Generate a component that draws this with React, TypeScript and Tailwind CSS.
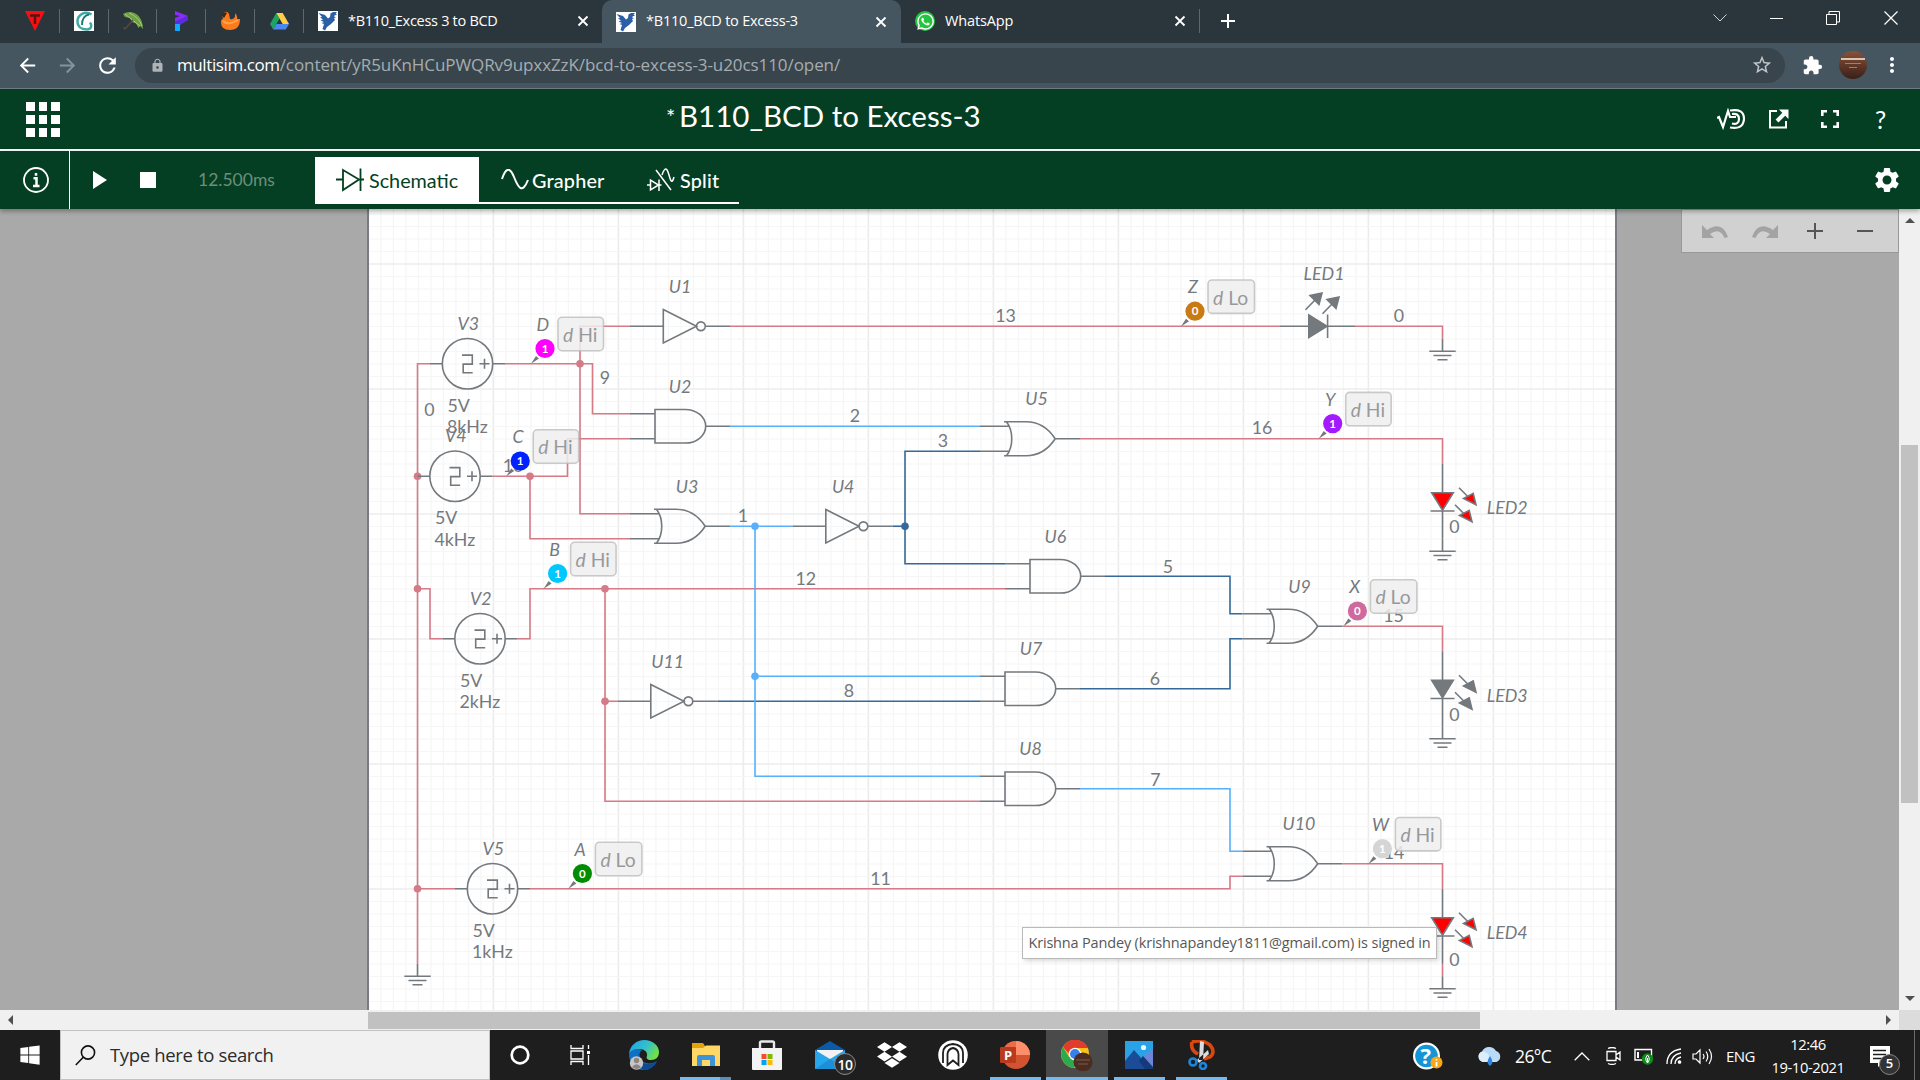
import React from 'react';
import { MdLock, MdStarBorder, MdExtension, MdMoreVert, MdSettings, MdArrowBack, MdArrowForward, MdRefresh } from 'react-icons/md';
import { FaDropbox, FaWindows, FaWhatsapp } from 'react-icons/fa';

type Pt = [number, number];

/* Schematic grid: one cell is 12.5px, origin at the top of the left supply bus. */
const U = 12.5;
const X = (k: number) => 417.5 + k * U;
const Y = (k: number) => 363.75 + k * U;

const INK = '#74797e';
const RED = '#d57a86';
const SKY = '#58b0fb';
const NAVY = '#35699a';

const wires: { c: string; p: Pt[] }[] = [
  { c: RED, p: [[1, 0], [0, 0], [0, 48]] },
  { c: RED, p: [[0, 18], [1, 18], [1, 22], [2, 22]] },
  { c: RED, p: [[0, 42], [3, 42]] },
  { c: RED, p: [[7, 0], [14, 0], [14, 4], [17, 4]] },
  { c: RED, p: [[17, -3], [13, -3], [13, 12], [17, 12]] },
  { c: RED, p: [[6, 9], [12, 9], [12, 6], [17, 6]] },
  { c: RED, p: [[9, 9], [9, 14], [17, 14]] },
  { c: RED, p: [[25, -3], [69, -3]] },
  { c: RED, p: [[75, -3], [82, -3], [82, -2]] },
  { c: RED, p: [[8, 22], [9, 22], [9, 18], [47, 18]] },
  { c: RED, p: [[15, 18], [15, 35], [45, 35]] },
  { c: RED, p: [[15, 27], [16, 27]] },
  { c: RED, p: [[9, 42], [65, 42], [65, 41], [66, 41]] },
  { c: RED, p: [[53, 6], [82, 6], [82, 8]] },
  { c: RED, p: [[74, 21], [82, 21], [82, 23]] },
  { c: RED, p: [[74, 40], [82, 40], [82, 42]] },
  { c: RED, p: [[82, 48], [82, 49]] },
  { c: NAVY, p: [[38, 13], [39, 13]] },
  { c: NAVY, p: [[45, 7], [39, 7], [39, 16], [47, 16]] },
  { c: NAVY, p: [[55, 17], [65, 17], [65, 20], [66, 20]] },
  { c: NAVY, p: [[53, 26], [65, 26], [65, 22], [66, 22]] },
  { c: NAVY, p: [[24, 27], [45, 27]] },
  { c: SKY, p: [[25, 5], [45, 5]] },
  { c: SKY, p: [[25, 13], [30, 13]] },
  { c: SKY, p: [[27, 13], [27, 33], [45, 33]] },
  { c: SKY, p: [[27, 25], [45, 25]] },
  { c: SKY, p: [[53, 34], [65, 34], [65, 39], [66, 39]] },
];

const nodes: [number, number, string][] = [
  [0, 9, RED], [0, 18, RED], [0, 42, RED], [13, 0, RED], [9, 9, RED], [15, 18, RED], [15, 27, RED],
  [27, 13, SKY], [27, 25, SKY], [39, 13, NAVY],
];

const sources: [number, number, string, string][] = [
  [4, 0, 'V3', '8kHz'], [3, 9, 'V4', '4kHz'], [5, 22, 'V2', '2kHz'], [6, 42, 'V5', '1kHz'],
];
const inverters: Pt[] = [[17, -3], [30, 13], [16, 27]];
const ands: Pt[] = [[17, 5], [47, 17], [45, 26], [45, 34]];
const ors: Pt[] = [[17, 13], [45, 6], [66, 21], [66, 40]];
const grounds: Pt[] = [[0, 48], [82, -2], [82, 14], [82, 29], [82, 49]];

const names: [string, number, number][] = [
  ['U1', 680, 292.7], ['U2', 680, 392.7], ['U3', 687, 492.7], ['U4', 843.2, 492.7], ['U5', 1036.5, 404.7],
  ['U6', 1055.4, 543], ['U7', 1031, 654.7], ['U8', 1030.6, 754.7], ['U9', 1299.6, 592.7], ['U10', 1299, 829.7],
  ['U11', 667.7, 668], ['LED1', 1324, 280],
];
const nets: [string, number, number][] = [
  ['0', 429.5, 415.7], ['9', 605, 383.5], ['10', 513, 472], ['1', 743, 522], ['13', 1005.5, 321.5], ['2', 855, 422],
  ['3', 943, 446.8], ['12', 805.7, 585], ['8', 849, 697], ['16', 1262, 433.8], ['5', 1168, 573], ['6', 1155, 685],
  ['7', 1155.5, 785.5], ['15', 1393.5, 622], ['14', 1394, 859], ['11', 880.5, 885], ['0', 1399, 321.5],
  ['0', 1454.3, 533.2], ['0', 1454.3, 721.3], ['0', 1454.3, 965.5],
];
const probes: { n: string; nx: number; x: number; y: number; c: string; v: string; s: string }[] = [
  { n: 'D', nx: 542.7, x: 545, y: 348.5, c: '#ff00ff', v: '1', s: 'Hi' },
  { n: 'C', nx: 518, x: 520.2, y: 461, c: '#0022ff', v: '1', s: 'Hi' },
  { n: 'B', nx: 554.7, x: 557.6, y: 573.5, c: '#00c8ff', v: '1', s: 'Hi' },
  { n: 'A', nx: 580, x: 582.4, y: 873.5, c: '#018c01', v: '0', s: 'Lo' },
  { n: 'Z', nx: 1193, x: 1195, y: 311.2, c: '#c97a12', v: '0', s: 'Lo' },
  { n: 'Y', nx: 1330.3, x: 1332.7, y: 423.6, c: '#a31aff', v: '1', s: 'Hi' },
  { n: 'X', nx: 1354.7, x: 1357.4, y: 611, c: '#cf6a9f', v: '0', s: 'Lo' },
  { n: 'W', nx: 1380.4, x: 1382.4, y: 848.7, c: '#d5d5d5', v: '1', s: 'Hi' },
];

function Led({ s, lit, name }: { s: number; lit: boolean; name: string }) {
  const fill = lit ? '#ff0000' : INK;
  return (
    <g transform={`translate(1442.5 ${Y(s)})`} stroke={INK} strokeWidth="1.6" fill="none">
      <path d="M0 0V29M0 48V75M-12 47.3H12" />
      <path d="M-10.8 29H10.8L0 46.5Z" fill={fill} />
      {[0, 1].map((i) => (
        <g key={i} transform={`translate(${-4 * i} ${17 * i})`}>
          <path d="M16.5 24L26 33.5" />
          <path d="M33.5 41L30.7 29.6L21 34.800Z" fill={fill} />
        </g>
      ))}
      <text x="44.2" y="50.6" fontStyle="italic" stroke="none" fill={INK}>{name}</text>
    </g>
  );
}

function Schematic() {
  const grid: React.ReactNode[] = [];
  for (let i = 0; i < 100; i++) grid.push(<path key={'v' + i} d={`M${368.4 + i * U} 209V1010`} stroke={i % 10 === 0 ? '#ececec' : '#f6f6f6'} strokeWidth={i % 10 === 0 ? 1.6 : 1.2} />);
  for (let i = -4; i < 60; i++) grid.push(<path key={'h' + i} d={`M368 ${264 + i * U}H1617`} stroke={i % 10 === 0 ? '#ececec' : '#f6f6f6'} strokeWidth={i % 10 === 0 ? 1.6 : 1.2} />);
  return (
    <svg width="1246" height="801" viewBox="369 209 1246 801" className="block font-['Lato',sans-serif] text-[17.8px]">
      {grid}
      <g fill="none" strokeWidth="1.6">
        {wires.map((w, i) => <polyline key={i} stroke={w.c} points={w.p.map(([a, b]) => `${X(a)},${Y(b)}`).join(' ')} />)}
      </g>
      {nodes.map(([a, b, c], i) => <circle key={i} cx={X(a)} cy={Y(b)} r="3.8" fill={c} />)}
      <g fill="none" stroke={INK} strokeWidth="1.6">
        {sources.map(([a, b, n, f]) => (
          <g key={n} transform={`translate(${X(a)} ${Y(b)})`}>
            <circle r="25.2" />
            <path d="M-37.5 0H-25.2M25.2 0H37.5" />
            <path d="M-5.5 -8.6H4.8V0.4H-4.3V9H5.2M12 0H22M17 -5V5" />
            <text x="0.8" y="-34" textAnchor="middle" fontStyle="italic" stroke="none" fill={INK}>{n}</text>
            <text x="-20" y="48" stroke="none" fill={INK}>5V</text>
            <text x="-20.5" y="69.5" stroke="none" fill={INK}>{f}</text>
          </g>
        ))}
        {inverters.map(([a, b], i) => (
          <path key={i} transform={`translate(${X(a)} ${Y(b)})`} d="M0 0H33M33.3 -16.8L66.5 0L33.3 16.8ZM75.3 0A4.4 4.4 0 1 1 66.5 0A4.4 4.4 0 1 1 75.3 0M75.3 0H100" />
        ))}
        {ands.map(([a, b], i) => (
          <path key={i} transform={`translate(${X(a)} ${Y(b)})`} d="M0 -12.5H25M0 12.5H25M25 -16.8H55C67 -16.8 75.7 -9 75.7 0S67 16.8 55 16.8H25ZM75.7 0H100" />
        ))}
        {ors.map(([a, b], i) => (
          <path key={i} transform={`translate(${X(a)} ${Y(b)})`} d="M0 -12.5H29.5M0 12.5H29.5M24 -17H46C59 -17 68 -11 75.2 0C68 11 59 17 46 17H24M26.5 -17C33.5 -8 33.5 8 26.5 17M75.2 0H100" />
        ))}
        {grounds.map(([a, b], i) => (
          <path key={i} transform={`translate(${X(a)} ${Y(b)})`} d="M0 0V12.5M-13.2 12.5H13.2M-9 16.8H9M-5 21H5" />
        ))}
        <path d="M1280 326.25H1308M1327.6 326.25H1355M1327.6 314.5V338" />
        <path d="M1308.8 315L1327 326.25L1308.8 337.5Z" fill={INK} />
        {[0, 1].map((i) => (
          <g key={i} transform={`translate(${17 * i} ${4 * i})`}>
            <path d="M1305.5 309.8L1315 300" />
            <path d="M1322 293L1310 295.5L1319 304.5Z" fill={INK} />
          </g>
        ))}
      </g>
      <Led s={8} lit name="LED2" />
      <Led s={23} lit={false} name="LED3" />
      <Led s={42} lit name="LED4" />
      {names.map(([t, x, y]) => <text key={t} x={x} y={y} textAnchor="middle" fontStyle="italic" fill={INK}>{t}</text>)}
      {nets.map(([t, x, y], i) => <text key={i} x={x} y={y} textAnchor="middle" fill={INK}>{t}</text>)}
      {probes.map((p) => (
        <g key={p.n}>
          <path d={`M${p.x - 14} ${p.y + 15.2}L${p.x - 9} ${p.y + 7.5}L${p.x - 6} ${p.y + 10}Z`} fill={INK} />
          <circle cx={p.x} cy={p.y} r="9.6" fill={p.c} />
          <text x={p.x} y={p.y + 4} textAnchor="middle" fontSize="11.5" fontWeight="700" fill="#fff">{p.v}</text>
          <text x={p.nx} y={p.y - 18} textAnchor="middle" fontStyle="italic" fill={INK}>{p.n}</text>
          <rect x={p.x + 13} y={p.y - 31.2} width={p.s === 'Lo' ? 46.5 : 45.5} height="33.4" rx="4" fill="#eeeeee" fillOpacity="0.85" stroke="#b9b9b9" strokeOpacity="0.75" strokeWidth="1.6" />
          <text x={p.x + 18} y={p.y - 6.6} fontSize="19.3" fill="#97999c"><tspan fontStyle="italic">d</tspan> {p.s}</text>
        </g>
      ))}
    </svg>
  );
}

function Eagle() {
  return (
    <svg width="20" height="20" viewBox="0 0 20 20" className="shrink-0">
      <rect width="20" height="20" fill="#fff" />
      <path d="M0.500 2L7 4L10 7.500L12 6L12.500 2.500L15 1H19L17.500 2.500L19 3.500L16.500 4.500V6H18.500L16 7L17 9L13 13L9 16L7 19.500L4.500 18L6 13L3.500 12L6 11L2.500 9.500L5 8.500L2 6.500L4 6Z" fill="#2a5fa5" />
    </svg>
  );
}

function TabClose() {
  return <svg width="12" height="12" viewBox="0 0 12 12" className="shrink-0"><path d="M1.500 1.500L10.500 10.500M10.500 1.500L1.500 10.500" stroke="#fff" strokeWidth="1.800" /></svg>;
}

function TabStrip() {
  return (
    <div className="flex h-[43px] items-center bg-[#2b363c] pb-px text-[14.5px] text-white">
      <div className="flex h-6 w-[60px] items-center border-r border-[#5d676e] pl-[25px]">
        <svg width="20" height="20" viewBox="0 0 20 20"><path d="M0 0H20L10 20Z" fill="#f80f0f" /><path d="M5 4.500H15M10 4.500V13" stroke="#5a1212" strokeWidth="2.400" /></svg>
      </div>
      <div className="flex h-6 w-[49px] items-center justify-center border-r border-[#5d676e]">
        <svg width="20" height="20" viewBox="0 0 20 20"><rect width="20" height="20" fill="#fff" /><path d="M17.500 3.500C11 -1 3.500 4 3.500 10.500C3.500 16 8 18.500 13 18.500C17 18.500 18.500 15 16 11.500" fill="none" stroke="#3fa9a2" strokeWidth="2.400" /><path d="M15 3.500Q8 5 8 14" fill="none" stroke="#167a78" strokeWidth="1.800" /></svg>
      </div>
      <div className="flex h-6 w-[48px] items-center justify-center border-r border-[#5d676e]">
        <svg width="20" height="20" viewBox="0 0 20 20"><path d="M0 3C7 -2 20 2 20 18L17 15L15.500 17L13 12.500L9 11L7 7L2 6Z" fill="#6f9f45" /><path d="M2 3L17 15M6 2Q16 6 19 15" stroke="#a6cc7c" fill="none" /><path d="M10 9L3 17Q1 19 1 16" fill="none" stroke="#5a4a42" strokeWidth="1.400" /></svg>
      </div>
      <div className="flex h-6 w-[49px] items-center justify-center border-r border-[#5d676e]">
        <svg width="14" height="20" viewBox="0 0 14 20"><path d="M1 0L14 5L1 11V7L6 5L1 4Z" fill="#8a2cff" /><path d="M14 5V9L6 14H1V11Z" fill="#5b2be0" /><path d="M1 13H6V20H1Z" fill="#12a8ff" /></svg>
      </div>
      <div className="flex h-6 w-[49px] items-center justify-center border-r border-[#5d676e]">
        <svg width="20" height="20" viewBox="0 0 20 20"><path d="M2 4Q6 -2 9 3L10 8Q16 9 15 2Q18 5 17 8L20 8Q20 19 10 19Q1 19 1 11Q1 8 3 8Z" fill="#ff7a1a" /><path d="M1 4Q4 0 7 2L4 7Z" fill="#3b2a1c" /><path d="M3 10Q8 15 18 9" fill="none" stroke="#ffa64a" strokeWidth="2" /></svg>
      </div>
      <div className="flex h-6 w-[49px] items-center justify-center border-r border-[#5d676e]">
        <svg width="19" height="17" viewBox="0 0 19 17"><path d="M6.300 0L9.500 5.500L3.200 16.500L0 11Z" fill="#1da462" /><path d="M6.300 0H12.700L19 11H12.700Z" fill="#ffcf48" /><path d="M6.300 11H19L15.800 16.500H3.200Z" fill="#4b87f0" /></svg>
      </div>
      <div className="flex w-[298px] items-center pl-[14px]">
        <Eagle /><span className="-mt-px ml-[10px] w-[229px] whitespace-nowrap font-['Open_Sans',sans-serif] tracking-[-0.29px]">*B110_Excess 3 to BCD</span><TabClose />
      </div>
      <div className="mt-px flex h-[43px] w-[299px] items-center rounded-t-[10px] bg-[#455660] pl-[14px]">
        <Eagle /><span className="-mt-px ml-[10px] w-[229px] whitespace-nowrap font-['Open_Sans',sans-serif] tracking-[-0.22px]">*B110_BCD to Excess-3</span><TabClose />
      </div>
      <div className="flex h-6 w-[299px] items-center border-r border-[#5d676e] pl-[14px]">
        <span className="flex size-5 shrink-0 items-center justify-center rounded-full bg-[#25c33f]"><FaWhatsapp size={19} /></span>
        <span className="-mt-px ml-[10px] w-[229px] font-['Open_Sans',sans-serif] tracking-[-0.15px]">WhatsApp</span><TabClose />
      </div>
      <svg width="14" height="14" viewBox="0 0 14 14" className="ml-[21px]"><path d="M7 0V14M0 7H14" stroke="#fff" strokeWidth="2" /></svg>
      <div className="ml-auto flex h-9 items-center self-start">
        <svg width="14" height="8" viewBox="0 0 14 8" className="mr-[43px]"><path d="M0.500 0.500L7 7L13.500 0.500" stroke="#cfd4d6" fill="none" /></svg>
        <span className="mr-[43px] h-px w-[13px] bg-white" />
        <svg width="14" height="14" viewBox="0 0 14 14" className="mr-[44px]"><path d="M0.500 3.500H10.500V13.500H0.500ZM3 3V0.500H13.500V11H11" stroke="#fff" fill="none" /></svg>
        <svg width="14" height="14" viewBox="0 0 14 14" className="mr-[22px]"><path d="M0.500 0.500L13.500 13.500M13.500 0.500L0.500 13.500" stroke="#fff" strokeWidth="1.200" /></svg>
      </div>
    </div>
  );
}

function AddressBar() {
  return (
    <div className="flex h-[46px] items-center border-b border-[#6f7b82] bg-[#455660] pb-[1px] text-white">
      <MdArrowBack size={23} className="ml-4" />
      <MdArrowForward size={23} className="ml-[17px] text-[#87939a]" />
      <MdRefresh size={25} className="ml-[16px]" />
      <div className="ml-[15px] flex h-[35px] w-[1650px] items-center rounded-full bg-[#39454c]">
        <MdLock size={15} className="ml-[15px] text-[#adb3b7]" />
        <span className="ml-[12px] whitespace-nowrap font-['Open_Sans',sans-serif] text-[17px] tracking-[-0.08px] text-[#a5adb1]"><span className="tracking-[-0.4px] text-white">multisim.com</span>/content/yR5uKnHCuPWQRv9upxxZzK/bcd-to-excess-3-u20cs110/open/</span>
        <MdStarBorder size={22} className="ml-auto mr-[12px] text-[#c3c8cb]" />
      </div>
      <MdExtension size={21} className="ml-[17px]" />
      <div className="ml-[16px] flex size-7 flex-col items-center justify-center gap-[3px] overflow-hidden rounded-full bg-gradient-to-b from-[#8a5238] to-[#3a2018]">
        <span className="mt-[-5px] h-[2px] w-6 bg-[#d8c4b8]" /><span className="h-px w-4 bg-[#9c7f70]" /><span className="h-px w-2 bg-[#9c7f70]" />
      </div>
      <MdMoreVert size={24} className="ml-[13px]" />
    </div>
  );
}

function AppHeader() {
  return (
    <div className="flex h-[62px] items-center border-b-2 border-white bg-[#043f23] text-white">
      <div className="ml-[26px] grid w-[34px] grid-cols-3 gap-x-[4px] gap-y-[4px]">
        {[0, 1, 2, 3, 4, 5, 6, 7, 8].map((i) => <span key={i} className="h-[9px] bg-white" />)}
      </div>
      <div className="ml-[606px] flex items-center whitespace-nowrap pb-[5px] font-['Lato',sans-serif] text-[29.5px]">
        <span className="w-[13px] text-[22px]">*</span><span>B110_BCD to Excess-3</span>
      </div>
      <div className="ml-auto flex items-center pr-[34px]">
        <svg width="28" height="22" viewBox="0 0 28 20" fill="none" stroke="#fff" strokeWidth="2.200"><path d="M0 9L2 8L6 18L11 2L13 8L19 8" /><path d="M13 1.500Q27 -1 27 10Q26 21 13 18.500" /><path d="M15 5Q22 4 22 10T15 14.500" /></svg>
        <svg width="20" height="20" viewBox="0 0 20 20" fill="none" stroke="#fff" strokeWidth="2" className="ml-6"><path d="M8 2H1V18.500H17V12" /><path d="M8 12L15 5" strokeWidth="4" /><path d="M10 0.500H19.500V10Z" fill="#fff" stroke="none" /></svg>
        <svg width="20" height="20" viewBox="0 0 20 20" fill="none" stroke="#fff" strokeWidth="2.600" className="ml-[31px]"><path d="M7 2.300H2.300V7M13 2.300H17.700V7M7 17.700H2.300V13M13 17.700H17.700V13" /></svg>
        <span className="ml-[35px] w-[11px] font-['Lato',sans-serif] text-[25px] leading-none">?</span>
      </div>
    </div>
  );
}

function SimBar() {
  return (
    <div className="relative z-10 flex h-[58px] bg-[#043f23] font-['Lato',sans-serif] text-[19.8px] text-white shadow-[0_2px_5px_rgba(0,0,0,0.35)]">
      <div className="flex w-[70px] items-center border-r border-white pl-[23px]">
        <svg width="26" height="26" viewBox="0 0 26 26" fill="none" stroke="#fff"><circle cx="13" cy="13" r="12" strokeWidth="1.800" /><path d="M13 6V8.700M10.500 11.200H13.500V18.500M10 19H16.500" strokeWidth="2.500" /></svg>
      </div>
      <svg width="14" height="18" viewBox="0 0 14 18" className="ml-[23px] mt-[20px]"><path d="M0 0L14 9L0 18Z" fill="#fff" /></svg>
      <span className="ml-[33px] mt-[21px] size-4 bg-white" />
      <span className="ml-[42px] mt-[17px] w-[117px] text-[17.5px] leading-6 text-[#6c8e7b]">12.500ms</span>
      <div className="mt-[6px] flex h-[47px] border-b-2 border-white">
        <div className="flex h-[47px] w-[164px] items-center bg-white pl-[21px] text-[#043f23]">
          <svg width="28" height="24" viewBox="0 0 28 24" fill="none" stroke="#043f23" strokeWidth="1.800" className="-mt-0.5 shrink-0"><path d="M0 11.500H7M7 2V22L23 11.500ZM24.500 0.500V23M24 11.500H28" /></svg>
          <span className="ml-[5px]">Schematic</span>
        </div>
        <div className="flex w-[150px] items-center pl-[22px]">
          <svg width="28" height="22" viewBox="0 0 28 22" fill="none" stroke="#fff" strokeWidth="2" className="shrink-0"><path d="M1 10C5 -2 9 -2 13 8S21 26 27 11" /></svg>
          <span className="ml-[3px] mt-0.5 font-medium tracking-[0.2px]">Grapher</span>
        </div>
        <div className="flex w-[110px] items-center pl-[18px]">
          <svg width="28" height="24" viewBox="0 0 28 24" fill="none" stroke="#fff" strokeWidth="1.500" className="shrink-0"><path d="M0 17H3M3.500 12V22L11.500 17ZM12 11.500V23M12 17H14.500M9 2L24 22" /><path d="M15 7C18 -2 20 0 22 7S25 16 27 9" /></svg>
          <span className="ml-[5px] mt-0.5 font-medium tracking-[0.2px]">Split</span>
        </div>
      </div>
      <MdSettings size={30} className="ml-auto mr-[18px] mt-[14px]" />
    </div>
  );
}

function Workspace() {
  return (
    <div className="flex h-[801px] bg-[#a9a9a9]">
      <div className="ml-[367px] border-x-2 border-[#797c80] bg-white"><Schematic /></div>
      <div className="ml-auto flex h-[44px] w-[218px] items-center border border-[#999] bg-[#d1d1d1] text-[#a3a3a3]">
        <svg width="26" height="13" viewBox="0 0 26 13" className="ml-[20px]"><path d="M0 0V13H12L8 9Q18 2 22.500 13L26 12Q20 -5 5 5Z" fill="currentColor" /></svg>
        <svg width="26" height="13" viewBox="0 0 26 13" className="ml-[24px] -scale-x-100"><path d="M0 0V13H12L8 9Q18 2 22.500 13L26 12Q20 -5 5 5Z" fill="currentColor" /></svg>
        <svg width="16" height="16" viewBox="0 0 16 16" className="ml-[29px]"><path d="M8 0V16M0 8H16" stroke="#555" strokeWidth="2" /></svg>
        <span className="ml-[34px] h-[2px] w-4 bg-[#555]" />
      </div>
      <div className="flex w-[21px] flex-col items-center bg-[#f0f0f0]">
        <svg width="10" height="5" viewBox="0 0 10 5" className="mt-[9px]"><path d="M0 5L5 0L10 5Z" fill="#505050" /></svg>
        <span className="mt-[222px] h-[358px] w-[17px] bg-[#c1c1c1]" />
        <svg width="10" height="5" viewBox="0 0 10 5" className="mt-[193px]"><path d="M0 0H10L5 5Z" fill="#505050" /></svg>
      </div>
    </div>
  );
}

function HScroll() {
  return (
    <div className="flex h-5 items-center bg-[#f0f0f0]">
      <svg width="5" height="10" viewBox="0 0 5 10" className="ml-2"><path d="M5 0V10L0 5Z" fill="#505050" /></svg>
      <span className="ml-[355px] h-[17px] w-[1112px] bg-[#c1c1c1]" />
      <svg width="5" height="10" viewBox="0 0 5 10" className="ml-[406px]"><path d="M0 0V10L5 5Z" fill="#505050" /></svg>
      <span className="ml-auto h-5 w-[21px] bg-[#dcdcdc]" />
    </div>
  );
}

function TaskItem({ w, bar, active, stacked, children }: { w: number; bar?: boolean; active?: boolean; stacked?: boolean; children: React.ReactNode }) {
  return (
    <div style={{ width: w }} className={'flex h-[50px] shrink-0 flex-col items-center ' + (active ? 'bg-[#4a4a4a]' : '')}>
      <div className="flex h-[47px] items-center pt-[3px]">{children}</div>
      {bar && <span className={'flex h-[3px] justify-end bg-[#76b9ed] ' + (active ? 'w-full' : 'w-[51px]')}>{stacked && <span className="h-[3px] w-[11px] bg-[#5b8fb8]" />}</span>}
    </div>
  );
}

function Taskbar() {
  return (
    <div className="flex h-[50px] bg-[#1e1e1e] font-['Open_Sans',sans-serif] text-white">
      <div className="flex w-[60px] items-center justify-center"><FaWindows size={22} /></div>
      <div className="flex w-[430px] items-center border border-[#c2c2c2] bg-[#f1f1f1] pl-[14px] text-[#2b2b2b]">
        <svg width="21" height="21" viewBox="0 0 21 21" fill="none" stroke="#111" strokeWidth="1.600"><circle cx="13" cy="7.500" r="6.600" /><path d="M8.500 12L0.800 20" /></svg>
        <span className="ml-[14px] text-[18.500px] tracking-[-0.35px]">Type here to search</span>
      </div>
      <TaskItem w={60}><svg width="20" height="20" viewBox="0 0 20 20"><circle cx="10" cy="10" r="8.300" fill="none" stroke="#fff" strokeWidth="2.700" /></svg></TaskItem>
      <TaskItem w={61}><svg width="21" height="20" viewBox="0 0 21 20" fill="none" stroke="#fff" strokeWidth="1.300"><path d="M1 0V3.500H13V0M1 6H13V14H1ZM1 20V16.500H13V20M18.500 0V4M18.500 10V20" /><path d="M17 6H20V9H17Z" fill="#fff" stroke="none" /></svg></TaskItem>
      <TaskItem w={65}>
        <svg width="30" height="30" viewBox="0 0 30 30">
          <defs><linearGradient id="eg" x1="0" y1="0" x2="1" y2="0.5"><stop offset="0" stopColor="#1ea0e8" /><stop offset="0.6" stopColor="#35c1c9" /><stop offset="1" stopColor="#6fe04a" /></linearGradient></defs>
          <path d="M0 14C1 5 8 0 15 0C24 0 30 6 30 12C30 17 27 20 22 20C18 20 17 18 18 16C19 12 15 9 11 9C6 9 1 12 0 14Z" fill="url(#eg)" />
          <path d="M0 14C2 9 9 8 13 10C9 12 10 21 17 23C21 24 25 23 28 21C25 27 20 30 15 30C6 30 0 23 0 14Z" fill="#1070c4" />
          <path d="M12 11C9 16 11 24 19 24C23 24 26 23 28 21C25 27 20 30 15 30C8 28 7 17 12 11Z" fill="#0c4a92" />
          <circle cx="7.500" cy="23" r="6.700" fill="#c9c6c3" /><circle cx="7.500" cy="20.500" r="2.700" fill="#8a8683" /><path d="M3 27Q7.500 21.500 12 27Q7.500 31 3 27Z" fill="#8a8683" />
        </svg>
      </TaskItem>
      <TaskItem w={59} bar stacked>
        <svg width="28" height="24" viewBox="0 0 28 24"><path d="M0 0H11L13 3H28V8H0Z" fill="#e5a00d" /><path d="M0 5H11L14 2.500H28V23H0Z" fill="#ffd766" /><path d="M5 23V14Q5 12 7 12H21Q23 12 23 14V23H18V17H10V23Z" fill="#3d92dc" /></svg>
      </TaskItem>
      <TaskItem w={64}>
        <svg width="30" height="30" viewBox="0 0 30 30"><path d="M8 9V3Q8 1.500 9.500 1.500H20.500Q22 1.500 22 3V9" fill="none" stroke="#e9e9e9" strokeWidth="2.400" /><path d="M0 8H30V29Q30 30 29 30H1Q0 30 0 29Z" fill="#f3f3f3" /><path d="M9.500 14H14.500V19H9.500Z" fill="#f25022" /><path d="M15.500 14H20.500V19H15.500Z" fill="#7fba00" /><path d="M9.500 20H14.500V25H9.500Z" fill="#00a4ef" /><path d="M15.500 20H20.500V25H15.500Z" fill="#ffb900" /></svg>
      </TaskItem>
      <TaskItem w={62}>
        <div className="relative">
          <svg width="30" height="28" viewBox="0 0 30 28"><path d="M0 9L15 0L30 9V20H0Z" fill="#0a5aa8" /><path d="M2 9H28V20H2Z" fill="#f2f2f2" /><path d="M0 9L15 18L30 9V28H0Z" fill="#27a6ea" /><path d="M0 28L15 18L30 28Z" fill="#1b8fd8" /></svg>
          <span className="absolute left-[19px] top-[12px] flex size-[22px] items-center justify-center rounded-full border border-[#8a8a8a] bg-[#2b2b2b] text-[14px] font-semibold tracking-[-0.5px]">10</span>
        </div>
      </TaskItem>
      <TaskItem w={61}><FaDropbox size={30} /></TaskItem>
      <TaskItem w={62}>
        <svg width="30" height="30" viewBox="0 0 30 30"><circle cx="15" cy="15" r="14.800" fill="#fff" /><path d="M5 23V13Q5 5 15 4Q25 5 25 13V23M9.500 25V14Q10 9 15 8Q20 9 20.500 14V25L15 20.500Z" fill="none" stroke="#1e1e1e" strokeWidth="1.800" /></svg>
      </TaskItem>
      <TaskItem w={62} bar>
        <svg width="30" height="28" viewBox="0 0 30 28"><circle cx="16" cy="14" r="14" fill="#d35230" /><path d="M16 0A14 14 0 0 1 30 14H16Z" fill="#ff8f6b" /><path d="M16 0A14 14 0 0 0 2 14H16Z" fill="#ed6c47" /><rect y="6" width="16" height="16" rx="1" fill="#b93a1c" /><text x="4" y="19" fontSize="13" fontWeight="700" fill="#fff">P</text></svg>
      </TaskItem>
      <TaskItem w={62} bar active>
        <svg width="32" height="31" viewBox="0 0 32 31"><circle cx="14" cy="14" r="14" fill="#fbc116" /><path d="M2 7A14 14 0 0 1 27 8H14L8 14Z" fill="#e33b2e" /><path d="M2 7A14 14 0 0 0 13 28L18 18L8 17Z" fill="#2da94f" /><circle cx="14" cy="14" r="6.300" fill="#fff" /><circle cx="14" cy="14" r="5" fill="#3a7ee8" /><circle cx="22" cy="22" r="9.500" fill="#4a2c20" /><path d="M15 20H29M17 24H27" stroke="#7d5d4c" /></svg>
      </TaskItem>
      <TaskItem w={62} bar>
        <svg width="28" height="28" viewBox="0 0 28 28"><rect width="28" height="28" fill="#2aa3e6" /><path d="M17 17L28 8V28H12Z" fill="#6f86d8" /><path d="M0 20L9 9L26 28H0Z" fill="#1a4c98" /><path d="M14 20L18 15L28 26V28H20Z" fill="#153a7a" /><circle cx="18.500" cy="6.500" r="2.600" fill="#e9f6ff" /></svg>
      </TaskItem>
      <TaskItem w={62} bar>
        <svg width="27" height="30" viewBox="0 0 27 30"><path d="M4 2Q14 -1 22 5Q28 12 22 17L16 19M4 2Q2 10 10 14" fill="none" stroke="#d9480f" strokeWidth="3.600" /><path d="M12 1L16 2L15 20L11 20ZM20 10L9 20L11 23L21 14Z" fill="#d9dde0" /><circle cx="5" cy="22" r="3.500" fill="none" stroke="#1b87dc" strokeWidth="2.600" /><circle cx="15" cy="26" r="3" fill="none" stroke="#1b87dc" strokeWidth="2.600" /></svg>
      </TaskItem>
      <div className="ml-auto flex items-center pt-[2px]">
        <svg width="30" height="28" viewBox="0 0 30 28" className="mr-[34px]"><circle cx="13.500" cy="14" r="13.500" fill="#fff" /><circle cx="13.500" cy="14" r="11.300" fill="#1495d6" /><text x="7.500" y="22" fontSize="22" fontWeight="700" fill="#fff">?</text><circle cx="23.500" cy="20.500" r="6" fill="#f5a81c" /><path d="M23.500 17V18.500M23.500 20V24.500" stroke="#fff" strokeWidth="1.800" /></svg>
        <svg width="26" height="21" viewBox="0 0 26 21" className="mr-[12px]"><path d="M6 16A5.500 5.500 0 0 1 5 5.500A8 8 0 0 1 19 5A5.800 5.800 0 0 1 19.500 16Z" fill="#b9dbf7" /><path d="M6 16A5.500 5.500 0 0 1 5 5.500Q11 6 12 10T19.500 16Z" fill="#dbeefc" /><path d="M13 10Q18 17 13 20Q8 17 13 10Z" fill="#2f86e0" /></svg>
        <span className="w-[59px] text-[17.500px] tracking-[-0.6px]">26°C</span>
        <svg width="16" height="9" viewBox="0 0 16 9" className="mr-[16px]"><path d="M0.700 8.300L8 1L15.300 8.300" stroke="#fff" strokeWidth="1.300" fill="none" /></svg>
        <svg width="15" height="18" viewBox="0 0 15 18" fill="none" stroke="#fff" strokeWidth="1.300" className="mr-[13px]"><path d="M1 4.500H10V13.500H1ZM10 8L14 5V13L10 10M2 1.500Q6 -0.500 10 1.500M2 16.500Q6 18.500 10 16.500" /></svg>
        <svg width="20" height="17" viewBox="0 0 20 17" className="mr-[12px]"><path d="M1 1.500H17.500V12H1Z" fill="none" stroke="#fff" strokeWidth="1.400" /><path d="M3 4H5V10H3Z" fill="#fff" /><circle cx="13.500" cy="11" r="5.700" fill="#0f8a1c" /><path d="M13.500 7Q17 11 13.500 15Q10 11 13.500 7ZM13.500 10V15" fill="none" stroke="#fff" /></svg>
        <svg width="16" height="17" viewBox="0 0 16 17" fill="none" stroke="#fff" strokeWidth="1.300" className="mr-[10px]"><path d="M1 16Q1 3 15 1M5 16Q5 7 15 5M9 16Q9 10.500 15 9" /><circle cx="13.500" cy="14" r="1.200" fill="#fff" /></svg>
        <svg width="21" height="17" viewBox="0 0 21 17" fill="none" stroke="#fff" strokeWidth="1.200" className="mr-[13px]"><path d="M1 6H4L8 2V15L4 11H1ZM11 6Q13 8.500 11 11M14 3.500Q17.500 8.500 14 13.500M17 1Q22 8.500 17 16" /></svg>
        <span className="w-[40px] text-[15px] tracking-[-0.6px]">ENG</span>
        <div className="flex w-[84px] flex-col items-center whitespace-nowrap text-[14.800px] leading-[23px] tracking-[-0.4px]"><span>12:46</span><span>19-10-2021</span></div>
        <div className="relative ml-[20px] mr-[24px] w-5">
          <svg width="20" height="21" viewBox="0 0 20 21"><path d="M0 0H20V17H12L8 21V17H0Z" fill="#fff" /><path d="M3 4.500H16M3 8.500H16M3 12.500H12" stroke="#1e1e1e" strokeWidth="1.600" /></svg>
          <span className="absolute left-[9px] top-[8px] flex size-[21px] items-center justify-center rounded-full border border-[#888] bg-[#333] text-[13px] font-semibold">5</span>
        </div>
        <span className="-mt-[2px] mr-[5px] h-[50px] w-px bg-[#6b6b6b]" />
      </div>
    </div>
  );
}

export default function App() {
  return (
    <div className="relative h-[1080px] w-[1920px] overflow-hidden bg-white">
      <TabStrip />
      <AddressBar />
      <AppHeader />
      <SimBar />
      <Workspace />
      <HScroll />
      <Taskbar />
      <div className="absolute left-[1022px] top-[927px] flex h-8 w-[415px] items-center justify-center whitespace-nowrap border border-[#b9b9b9] bg-white font-['Open_Sans',sans-serif] text-[14.500px] tracking-[-0.17px] text-[#575757] shadow-[2px_2px_4px_rgba(0,0,0,0.15)]">
        Krishna Pandey (krishnapandey1811@gmail.com) is signed in
      </div>
    </div>
  );
}
